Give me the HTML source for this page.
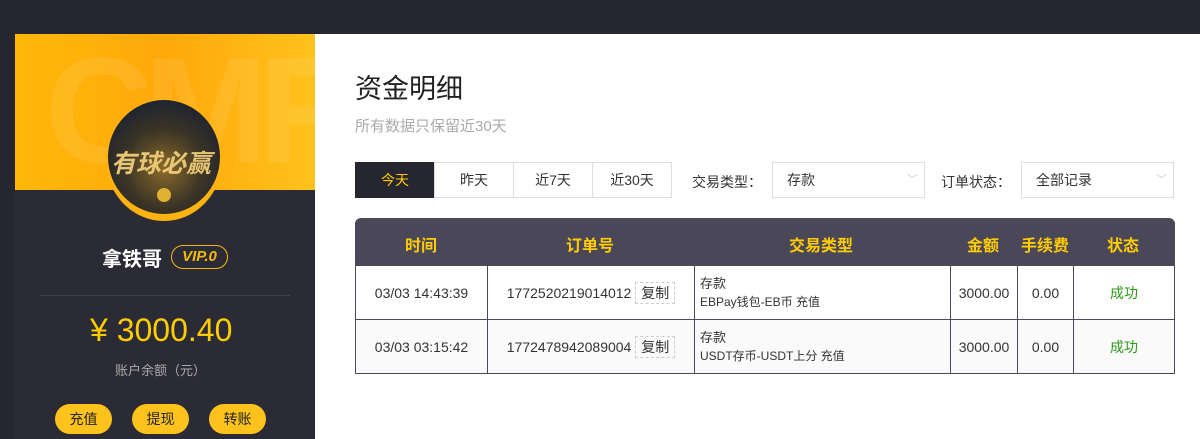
<!DOCTYPE html><html><head><meta charset="utf-8"><style>
*{margin:0;padding:0;box-sizing:border-box}
body{width:1200px;height:439px;overflow:hidden;background:#fff;font-family:"Liberation Sans","Noto Sans CJK SC",sans-serif;position:relative}
.a{position:absolute}
.top{left:0;top:0;width:1200px;height:34px;background:#262630}
.lstrip{left:0;top:34px;width:15px;height:405px;background:#262630}
.left{left:15px;top:34px;width:300px;height:405px;background:#2b2b35}
.ban{left:15px;top:34px;width:300px;height:156px;background:linear-gradient(90deg,#ffb80a,#ffa90a 50%,#ffc21e);overflow:hidden}
.av{left:106px;top:99px;width:116px;height:122px;border-radius:50%;background:#ffb30f}
.avi{left:108px;top:100px;width:112px;height:114px;border-radius:50%;background:radial-gradient(circle at 50% 60%,#8a6a2a,#3a3426 45%,#1d2230 80%);overflow:hidden}
.btn{top:404px;width:57px;height:30px;border-radius:15px;background:#fdc21b;color:#222;font-size:14px;text-align:center;line-height:30px}
table{border-collapse:collapse;font-size:14px;color:#333}
td{border:1px solid #4a4a58;text-align:center}
.f{top:162px;height:36px;border:1px solid #ddd;font-size:14px;text-align:center;line-height:34px;color:#333}
</style></head><body>
<div class="a top"></div><div class="a lstrip"></div>
<div class="a left"></div>
<div class="a ban"><div class="a" style="left:30px;top:-10px;font-size:150px;font-weight:bold;color:rgba(255,255,255,.08);letter-spacing:-10px">CMF</div></div>
<div class="a av"></div>
<div class="a avi"><div class="a" style="left:3px;top:44px;font-size:25px;font-weight:bold;color:#e8c673;font-style:italic;white-space:nowrap">有球必赢</div><div class="a" style="left:49px;top:88px;width:14px;height:14px;border-radius:50%;background:#e0b030"></div></div>
<div class="a" style="left:102px;top:243px;font-size:20px;font-weight:bold;color:#fff">拿铁哥</div>
<div class="a" style="left:171px;top:245px;width:57px;height:24px;border:1px solid #f5b90e;border-radius:12px;color:#f5b90e;font-size:15px;font-weight:bold;font-style:italic;text-align:center;line-height:22px">VIP.0</div>
<div class="a" style="left:40px;top:295px;width:250px;height:1px;background:#41414d"></div>
<div class="a" style="left:90px;top:312px;font-size:32px;color:#ffcc00;white-space:nowrap">¥ 3000.40</div>
<div class="a" style="left:115px;top:360px;font-size:13px;color:#aaa">账户余额（元）</div>
<div class="a btn" style="left:55px">充值</div><div class="a btn" style="left:132px">提现</div><div class="a btn" style="left:209px">转账</div>
<div class="a" style="left:355px;top:67px;font-size:27px;color:#222">资金明细</div>
<div class="a" style="left:355px;top:115px;font-size:15px;color:#aaa">所有数据只保留近30天</div>
<div class="a f" style="left:355px;width:80px;background:#262630;color:#ffcc00;border-color:#262630">今天</div>
<div class="a f" style="left:434px;width:80px">昨天</div>
<div class="a f" style="left:513px;width:80px">近7天</div>
<div class="a f" style="left:592px;width:80px">近30天</div>
<div class="a" style="left:692px;top:172px;font-size:14px;color:#333">交易类型：</div>
<div class="a f" style="left:772px;width:153px;text-align:left;padding-left:14px">存款<span class="a" style="right:6px;top:0;color:#ccc;font-size:11px">﹀</span></div>
<div class="a" style="left:941px;top:172px;font-size:14px;color:#333">订单状态：</div>
<div class="a f" style="left:1021px;width:153px;text-align:left;padding-left:14px">全部记录<span class="a" style="right:6px;top:0;color:#ccc;font-size:11px">﹀</span></div>
<div class="a" style="left:355px;top:218px;width:820px;height:48px;background:#4a4858;border-radius:6px 6px 0 0;color:#ffcc00;font-weight:bold;font-size:16px">
<span class="a" style="left:50px;top:14px">时间</span><span class="a" style="left:211px;top:14px">订单号</span><span class="a" style="left:434px;top:14px">交易类型</span><span class="a" style="left:612px;top:14px">金额</span><span class="a" style="left:666px;top:14px">手续费</span><span class="a" style="left:752px;top:14px">状态</span></div>
<table class="a" style="left:355px;top:265px;width:820px">
<tr style="height:54px"><td style="width:132px">03/03 14:43:39</td><td style="width:207px">1772520219014012 <span style="border:1px dashed #ccc;padding:2px 5px">复制</span></td><td style="text-align:left;padding-left:5px;font-size:13px;line-height:18px">存款<br><span style="font-size:12px">EBPay钱包-EB币 充值</span></td><td style="width:67px">3000.00</td><td style="width:56px">0.00</td><td style="width:101px;color:#2c9a16">成功</td></tr>
<tr style="height:54px;background:#fafafa"><td>03/03 03:15:42</td><td>1772478942089004 <span style="border:1px dashed #ccc;padding:2px 5px">复制</span></td><td style="text-align:left;padding-left:5px;font-size:13px;line-height:18px">存款<br><span style="font-size:12px">USDT存币-USDT上分 充值</span></td><td>3000.00</td><td>0.00</td><td style="color:#2c9a16">成功</td></tr>
</table>
</body></html>
